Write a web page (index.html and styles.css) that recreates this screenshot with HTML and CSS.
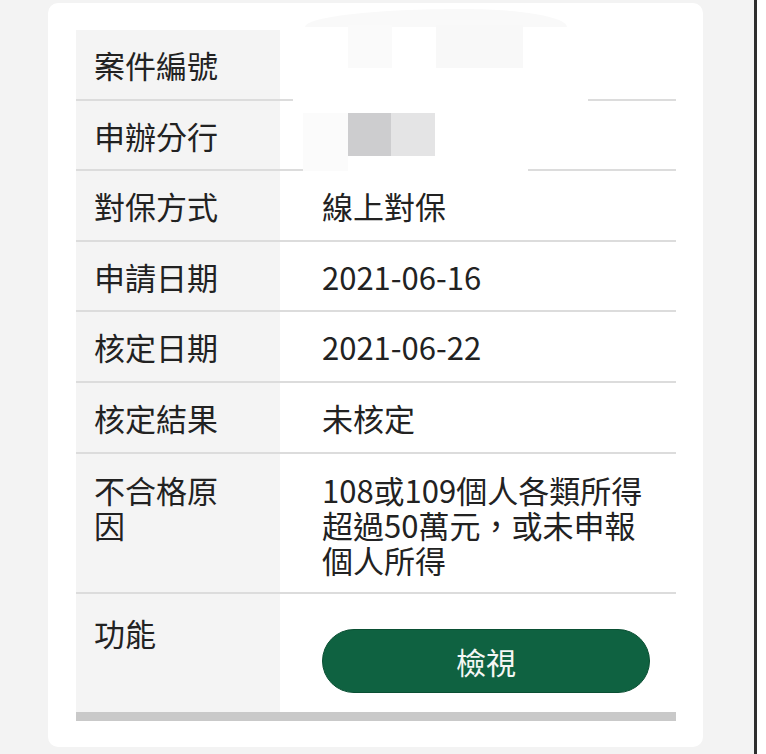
FILE: index.html
```html
<!DOCTYPE html>
<html lang="zh-Hant">
<head>
<meta charset="utf-8">
<title>案件查詢</title>
<link rel="stylesheet" href="styles.css">
</head>
<body>
<div class="page">
  <main class="stage">
    <section class="card">
      <div class="table">
        <div class="row"><div class="label">案件編號</div><div class="value"></div></div>
        <div class="row"><div class="label">申辦分行</div><div class="value"></div></div>
        <div class="row"><div class="label">對保方式</div><div class="value">線上對保</div></div>
        <div class="row"><div class="label">申請日期</div><div class="value">2021-06-16</div></div>
        <div class="row"><div class="label">核定日期</div><div class="value">2021-06-22</div></div>
        <div class="row"><div class="label">核定結果</div><div class="value">未核定</div></div>
        <div class="row row-tall"><div class="label">不合格原因</div><div class="value">108或109個人各類所得<br>超過50萬元，或未申報<br>個人所得</div></div>
        <div class="row row-action"><div class="label">功能</div><div class="value"><button class="btn" type="button">檢視</button></div></div>
        <div class="bar"></div>
      </div>
      <div class="redact">
        <span class="r r-top"></span>
        <span class="r r-a"></span>
        <span class="r r-b"></span>
        <span class="r r-line1"></span>
        <span class="r r-line2"></span>
        <span class="r r-e"></span>
        <span class="r r-c"></span>
        <span class="r r-d"></span>
      </div>
    </section>
  </main>
  <div class="divider"></div>
  <div class="edge"></div>
</div>
</body>
</html>
```

FILE: styles.css
```css
html, body {
  margin: 0;
  padding: 0;
  height: 754px;
  overflow: hidden;
  font-family: "Noto Sans CJK TC", "Noto Sans", sans-serif;
  color: #222;
}

.page {
  display: flex;
  height: 754px;
}

.stage {
  width: 754px;
  background: #f3f3f3;
  padding: 3px 0 0 48px;
  box-sizing: border-box;
}

.divider {
  width: 3px;
  background: #2e2e2e;
}

.edge {
  flex: 1;
  background: #fff;
}

.card {
  position: relative;
  width: 655px;
  height: 744px;
  box-sizing: border-box;
  background: #fff;
  border-radius: 10px;
  padding: 27px 27px 26px 28px;
}

.table {
  width: 600px;
}

.row {
  display: grid;
  grid-template-columns: 204px 1fr;
  border-bottom: 2px solid #dcdcdc;
  font-size: 31px;
  line-height: 35px;
}

.label {
  background: #f4f4f4;
  padding: 17px 40px 16.6px 18px;
}

.value {
  padding: 17px 10px 16.6px 42px;
  white-space: nowrap;
}

.row-tall .label,
.row-tall .value {
  padding-top: 18px;
  padding-bottom: 15px;
}

.row-action {
  border-bottom: 0;
}

.row-action .label {
  padding-top: 21px;
}

.row-action .value {
  padding: 35px 26px 19px 42px;
}

.btn {
  display: block;
  width: 328px;
  height: 64px;
  border-radius: 32px;
  border: 1px solid #0a4f33;
  background: #0f6241;
  color: #f4f7f5;
  font-family: "Noto Sans CJK TC", "Noto Sans", sans-serif;
  font-size: 30px;
  line-height: 60px;
  padding: 0;
  text-align: center;
}

.bar {
  height: 9px;
  background: #c9c9c9;
}

.redact {
  position: absolute;
  left: 0;
  top: 0;
  width: 0;
  height: 0;
}

.r {
  position: absolute;
  display: block;
}

.r-top {
  left: 257px;
  top: 6px;
  width: 262px;
  height: 18px;
  background: #f9f9f9;
  border-radius: 60% 40% 0 0 / 100% 100% 0 0;
}

.r-a {
  left: 300px;
  top: 22px;
  width: 44px;
  height: 43px;
  background: #fafafa;
}

.r-b {
  left: 388px;
  top: 22px;
  width: 87px;
  height: 43px;
  background: #f8f8f8;
}

.r-line1 {
  left: 245px;
  top: 93px;
  width: 295px;
  height: 8px;
  background: #fff;
}

.r-line2 {
  left: 255px;
  top: 164px;
  width: 225px;
  height: 8px;
  background: #fff;
}

.r-e {
  left: 255px;
  top: 110px;
  width: 45px;
  height: 58px;
  background: #fbfbfb;
}

.r-c {
  left: 300px;
  top: 110px;
  width: 43px;
  height: 43px;
  background: #cdcdcf;
}

.r-d {
  left: 343px;
  top: 110px;
  width: 44px;
  height: 43px;
  background: #e4e4e5;
}
```
